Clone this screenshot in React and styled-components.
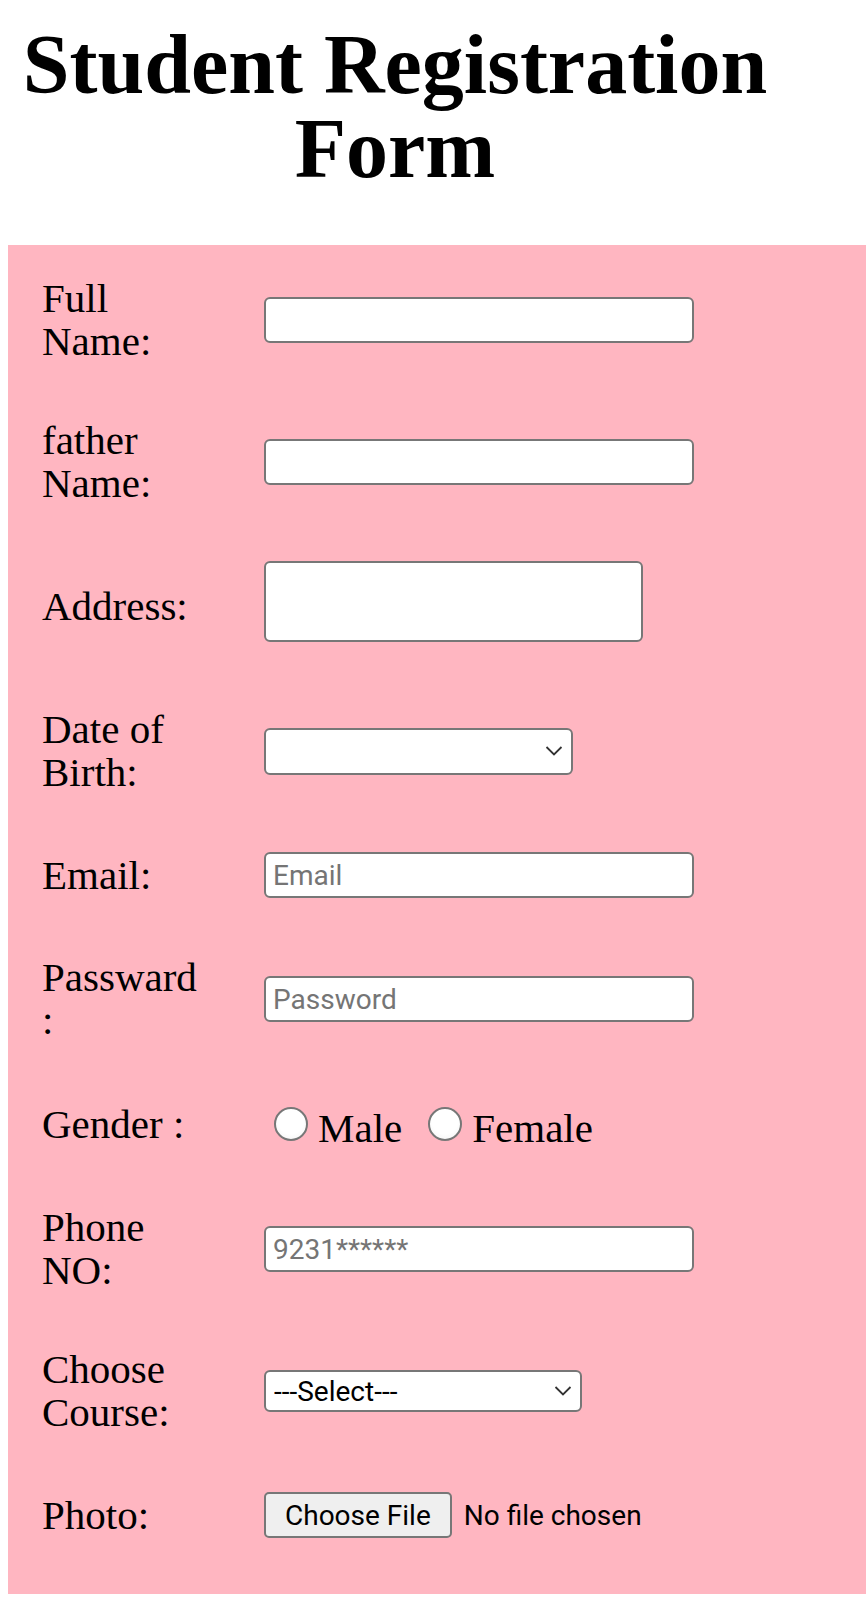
import React from 'react';
import styled, { createGlobalStyle } from 'styled-components';

const GlobalStyle = createGlobalStyle`
  body {
    margin: 0;
    background: #ffffff;
  }
`;

const Page = styled.div`
  padding-bottom: 7px;
`;

const Title = styled.h1`
  width: 774px;
  margin: 23px 0 54px 8px;
  font-family: 'Liberation Serif', serif;
  font-size: 84px;
  line-height: 84px;
  font-weight: 700;
  text-align: center;
  color: #000;
`;

const FormPanel = styled.form`
  margin-left: 8px;
  padding: 4px 0 26px 34px;
  background-color: #ffb6c1;
`;

const Row = styled.div`
  display: grid;
  grid-template-columns: 222px 1fr;
  align-items: center;
  padding: 28px 0;
`;

const Label = styled.label`
  display: block;
  width: 160px;
  font-family: 'Liberation Serif', serif;
  font-size: 41px;
  line-height: 43px;
  color: #000;
`;

const Field = styled.div`
  display: flex;
  align-items: center;
  min-height: 50px;
`;

const TextInput = styled.input`
  box-sizing: border-box;
  width: 430px;
  height: 46px;
  padding: 0 7px;
  border: 2px solid #777;
  border-radius: 6px;
  background: #fff;
  font-family: Roboto, sans-serif;
  font-size: 28px;
  color: #000;
  outline: none;

  &::placeholder {
    color: #757575;
  }
`;

const TextArea = styled.textarea`
  box-sizing: border-box;
  width: 379px;
  height: 81px;
  margin-bottom: 10px;
  border: 2px solid #777;
  border-radius: 6px;
  background: #fff;
  resize: none;
  outline: none;
`;

const SelectWrap = styled.div`
  position: relative;
  width: ${p => p.$width}px;
`;

const Select = styled.select`
  box-sizing: border-box;
  display: block;
  width: 100%;
  height: ${p => p.$height}px;
  padding: 0 30px 0 8px;
  border: 2px solid #777;
  border-radius: 6px;
  background: #fff;
  appearance: none;
  font-family: Roboto, sans-serif;
  font-size: 28px;
  color: #000;
  outline: none;
`;

const Chevron = styled.svg`
  position: absolute;
  right: 10px;
  top: 50%;
  transform: translateY(-50%);
  pointer-events: none;
`;

const RadioGroup = styled.div`
  display: flex;
  align-items: flex-end;
  gap: 16px;
  padding-top: 9px;
`;

const RadioOption = styled.label`
  display: inline-flex;
  align-items: flex-end;
  font-family: 'Liberation Serif', serif;
  font-size: 41px;
  line-height: 43px;
  color: #000;
`;

const Radio = styled.input`
  box-sizing: border-box;
  width: 34px;
  height: 34px;
  margin: 0 10px 9px 10px;
  border: 2px solid #777;
  border-radius: 50%;
  background: radial-gradient(circle at 50% 40%, #ffffff 55%, #f1f1f1 100%);
  appearance: none;
`;

const FileInput = styled.input`
  font-family: Roboto, sans-serif;
  font-size: 28px;
  color: #000;

  &::file-selector-button {
    box-sizing: border-box;
    height: 46px;
    padding: 0 19px;
    margin-right: 12px;
    border: 2px solid #777;
    border-radius: 5px;
    background: #efefef;
    font: inherit;
    color: #000;
  }
`;

const Arrow = () => (
  <Chevron width="18" height="11" viewBox="0 0 18 11">
    <path d="M1.5 1.5 L9 9 L16.5 1.5" fill="none" stroke="#333" strokeWidth="1.8" />
  </Chevron>
);

const App = () => {
  return (
    <Page>
      <GlobalStyle />
      <Title>Student Registration Form</Title>
      <FormPanel onSubmit={e => e.preventDefault()}>
        <Row>
          <Label htmlFor="fullname">Full Name:</Label>
          <Field>
            <TextInput id="fullname" type="text" />
          </Field>
        </Row>
        <Row>
          <Label htmlFor="father">father Name:</Label>
          <Field>
            <TextInput id="father" type="text" />
          </Field>
        </Row>
        <Row>
          <Label htmlFor="address">Address:</Label>
          <Field>
            <TextArea id="address" />
          </Field>
        </Row>
        <Row>
          <Label htmlFor="dob">Date of Birth:</Label>
          <Field>
            <SelectWrap $width={309}>
              <Select id="dob" $height={47} defaultValue="">
                <option value=""></option>
              </Select>
              <Arrow />
            </SelectWrap>
          </Field>
        </Row>
        <Row>
          <Label htmlFor="email">Email:</Label>
          <Field>
            <TextInput id="email" type="email" placeholder="Email" />
          </Field>
        </Row>
        <Row>
          <Label htmlFor="password">Passward :</Label>
          <Field>
            <TextInput id="password" type="password" placeholder="Password" />
          </Field>
        </Row>
        <Row>
          <Label>Gender :</Label>
          <Field>
            <RadioGroup>
              <RadioOption>
                <Radio type="radio" name="gender" value="male" />
                Male
              </RadioOption>
              <RadioOption>
                <Radio type="radio" name="gender" value="female" />
                Female
              </RadioOption>
            </RadioGroup>
          </Field>
        </Row>
        <Row>
          <Label htmlFor="phone">Phone NO:</Label>
          <Field>
            <TextInput id="phone" type="tel" placeholder="9231******" />
          </Field>
        </Row>
        <Row>
          <Label htmlFor="course">Choose Course:</Label>
          <Field>
            <SelectWrap $width={318}>
              <Select id="course" $height={42} defaultValue="">
                <option value="">---Select---</option>
                <option value="bsc">BSc</option>
                <option value="bcs">BCS</option>
              </Select>
              <Arrow />
            </SelectWrap>
          </Field>
        </Row>
        <Row>
          <Label htmlFor="photo">Photo:</Label>
          <Field>
            <FileInput id="photo" type="file" />
          </Field>
        </Row>
      </FormPanel>
    </Page>
  );
};

export default App;
